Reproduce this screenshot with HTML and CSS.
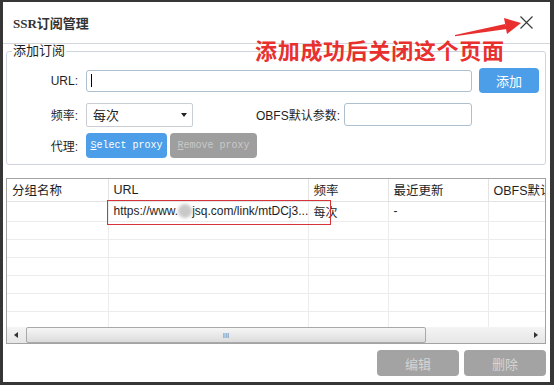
FILE: index.html
```html
<!DOCTYPE html>
<html lang="zh-CN">

<head>
    <meta charset="UTF-8">
    <meta name="viewport" content="width=device-width, initial-scale=1.0">
    <title>SSR订阅管理</title>
    <link rel="stylesheet" href="styles.css">
</head>

<body>
<div class="window">
    <div class="title_bar">
        <span class="title">SSR订阅管理</span>
        <svg class="close" viewBox="0 0 13 13" width="13" height="13">
            <path d="M0.5 0.5 L12.5 12.5 M12.5 0.5 L0.5 12.5" stroke="#3c3c3c" stroke-width="1.2" fill="none"/>
        </svg>
    </div>

    <!-- 标注 -->
    <div class="note">添加成功后关闭这个页面</div>
    <svg class="note_arrow" viewBox="0 0 80 28" width="80" height="28">
        <polygon points="5,21 55,10 57,15 5,22.2" fill="#e8302e"/>
        <polygon points="54,4 71,9 57,20" fill="#e8302e"/>
    </svg>

    <fieldset class="group">
        <legend>添加订阅</legend>
        <div class="row">
            <label class="lbl">URL:</label>
            <div class="input url_input"><span class="caret"></span></div>
            <a href="javascript:;" class="btn btn_blue add_btn">添加</a>
        </div>
        <div class="row row_2">
            <label class="lbl">频率:</label>
            <div class="select">每次<span class="arrow"></span></div>
            <label class="lbl obfs_lbl">OBFS默认参数:</label>
            <div class="input obfs_input"></div>
        </div>
        <div class="row row_3">
            <label class="lbl">代理:</label>
            <a href="javascript:;" class="btn btn_blue mono select_btn"><u>S</u>elect proxy</a>
            <a href="javascript:;" class="btn btn_gray mono remove_btn"><u>R</u>emove proxy</a>
        </div>
    </fieldset>

    <div class="list">
        <div class="list_body">
            <table>
                <colgroup>
                    <col style="width:101px">
                    <col style="width:200px">
                    <col style="width:80px">
                    <col style="width:100px">
                    <col style="width:100px">
                </colgroup>
                <thead>
                <tr>
                    <th>分组名称</th>
                    <th>URL</th>
                    <th>频率</th>
                    <th>最近更新</th>
                    <th>OBFS默认参数</th>
                </tr>
                </thead>
                <tbody>
                <tr>
                    <td></td>
                    <td>https://www.<span class="blur"></span>jsq.com/link/mtDCj3...</td>
                    <td>每次</td>
                    <td>-</td>
                    <td></td>
                </tr>
                <tr><td></td><td></td><td></td><td></td><td></td></tr>
                <tr><td></td><td></td><td></td><td></td><td></td></tr>
                <tr><td></td><td></td><td></td><td></td><td></td></tr>
                <tr><td></td><td></td><td></td><td></td><td></td></tr>
                <tr><td></td><td></td><td></td><td></td><td></td></tr>
                <tr><td></td><td></td><td></td><td></td><td></td></tr>
                </tbody>
            </table>
            <div class="mark"></div>
        </div>
        <div class="hscroll">
            <div class="sb_btn"><span class="tri_left"></span></div>
            <div class="track">
                <div class="thumb"><span class="grip">III</span></div>
            </div>
            <div class="sb_btn"><span class="tri_right"></span></div>
        </div>
    </div>

    <div class="footer">
        <a href="javascript:;" class="btn btn_gray foot_btn">编辑</a>
        <a href="javascript:;" class="btn btn_gray foot_btn">删除</a>
    </div>
</div>
</body>

</html>
```

FILE: styles.css
```css
* {
    margin: 0;
    padding: 0;
    box-sizing: border-box;
}

body {
    background: #363636;
    font-family: "Liberation Sans", "Noto Sans CJK SC", sans-serif;
    font-size: 12px;
    color: #1e1e1e;
}

a {
    text-decoration: none;
}

.window {
    position: relative;
    margin: 2px 4px 0 3px;
    height: 380px;
    background: #fff;
    display: flex;
    flex-direction: column;
}

/* 标题栏 */
.title_bar {
    height: 42px;
    flex-shrink: 0;
    border-bottom: 1px solid #d3d8de;
    display: flex;
    align-items: center;
    justify-content: space-between;
    padding: 0 17px 0 10px;
}

.title {
    font: bold 13px "Liberation Serif", "Noto Sans CJK SC", serif;
    color: #333;
}

/* 标注 */
.note {
    position: absolute;
    left: 252px;
    top: 34px;
    font: bold 22px "Noto Sans CJK SC", sans-serif;
    line-height: 26px;
    letter-spacing: 0.7px;
    color: #e8302e;
}

.note_arrow {
    position: absolute;
    left: 447px;
    top: 12px;
}

/* 添加订阅 */
.group {
    margin: 0 4px 0 3px;
    border: 1px solid #cdd6e0;
    border-radius: 3px;
    padding: 10px 0 6px;
}

.group legend {
    margin-left: 5px;
    padding: 0 1px;
    font-size: 13px;
    line-height: 14px;
}

.row {
    display: flex;
    align-items: center;
    height: 25px;
}

.row_2 {
    margin-top: 9px;
}

.row_3 {
    margin-top: 6px;
}

.lbl {
    width: 71px;
    margin-right: 8px;
    text-align: right;
    font-size: 12px;
}

.input {
    height: 22px;
    border: 1px solid #aebfd0;
    border-radius: 3px;
    background: #fff;
    display: flex;
    align-items: center;
}

.url_input {
    width: 386px;
    padding-left: 4px;
}

.caret {
    width: 1px;
    height: 13px;
    background: #000;
}

.obfs_lbl {
    width: 147px;
    margin-right: 4px;
}

.obfs_input {
    width: 128px;
    height: 23px;
}

.select {
    width: 107px;
    height: 24px;
    border: 1px solid #c9ced4;
    border-radius: 2px;
    display: flex;
    align-items: center;
    justify-content: space-between;
    padding: 0 5px 0 6px;
    font-size: 13px;
}

.arrow {
    width: 0;
    height: 0;
    border-left: 3.5px solid transparent;
    border-right: 3.5px solid transparent;
    border-top: 4px solid #222;
}

.btn {
    height: 25px;
    display: flex;
    align-items: center;
    justify-content: center;
    border-radius: 4px;
}

.btn_blue {
    background: #4c9ee8;
    color: #fff;
}

.btn_gray {
    background: #9e9e9e;
    color: #c9c9c9;
}

.add_btn {
    width: 60px;
    margin-left: 7px;
    font-size: 13px;
}

.mono {
    font-family: "Liberation Mono", monospace;
    font-size: 10px;
}

.select_btn {
    width: 81px;
}

.remove_btn {
    width: 87px;
    margin-left: 3px;
}

/* 列表 */
.list {
    margin: 13px 4px 0 3px;
    border: 1px solid #a3a3a3;
    height: 166px;
    flex-shrink: 0;
}

.list_body {
    position: relative;
    height: 148px;
    overflow: hidden;
}

.list_body table {
    table-layout: fixed;
    border-collapse: collapse;
    width: 581px;
}

.list_body th {
    height: 22px;
    text-align: left;
    font-weight: normal;
    font-size: 12.5px;
    padding-left: 5px;
    border-right: 1px solid #e3e3e3;
    border-bottom: 1px solid #e3e3e3;
    white-space: nowrap;
    overflow: hidden;
}

.list_body td {
    height: 18px;
    padding-left: 5px;
    border-right: 1px solid #ececec;
    border-bottom: 1px solid #ececec;
    white-space: nowrap;
    overflow: hidden;
}

.list_body tbody tr:first-child td {
    height: 20px;
}

.blur {
    display: inline-block;
    width: 14px;
    height: 14px;
    vertical-align: -3px;
    border-radius: 50%;
    background: #c9c9c9;
    filter: blur(1.5px);
}

.mark {
    position: absolute;
    left: 100px;
    top: 21px;
    width: 224px;
    height: 25px;
    border: 1px solid #d6333b;
}

.hscroll {
    height: 16px;
    display: flex;
    background: linear-gradient(#f4f4f4, #e6e6e6);
}

.sb_btn {
    width: 18px;
    display: flex;
    align-items: center;
    justify-content: center;
}

.tri_left {
    border-top: 3.5px solid transparent;
    border-bottom: 3.5px solid transparent;
    border-right: 4px solid #333;
}

.tri_right {
    border-top: 3.5px solid transparent;
    border-bottom: 3.5px solid transparent;
    border-left: 4px solid #333;
}

.track {
    flex: 1;
    padding: 0 1px;
}

.thumb {
    width: 400px;
    height: 16px;
    border: 1px solid #a9a9a9;
    border-radius: 2px;
    background: linear-gradient(#f6f6f6, #dcdcdc);
    display: flex;
    align-items: center;
    justify-content: center;
}

.grip {
    font-size: 8px;
    color: #777;
}

/* 底部按钮 */
.footer {
    display: flex;
    justify-content: flex-end;
    gap: 5px;
    padding: 6px 4px 0;
}

.foot_btn {
    width: 82px;
    height: 26px;
    font-size: 13px;
    color: #d4d4d4;
    background: #a3a3a3;
}
```
